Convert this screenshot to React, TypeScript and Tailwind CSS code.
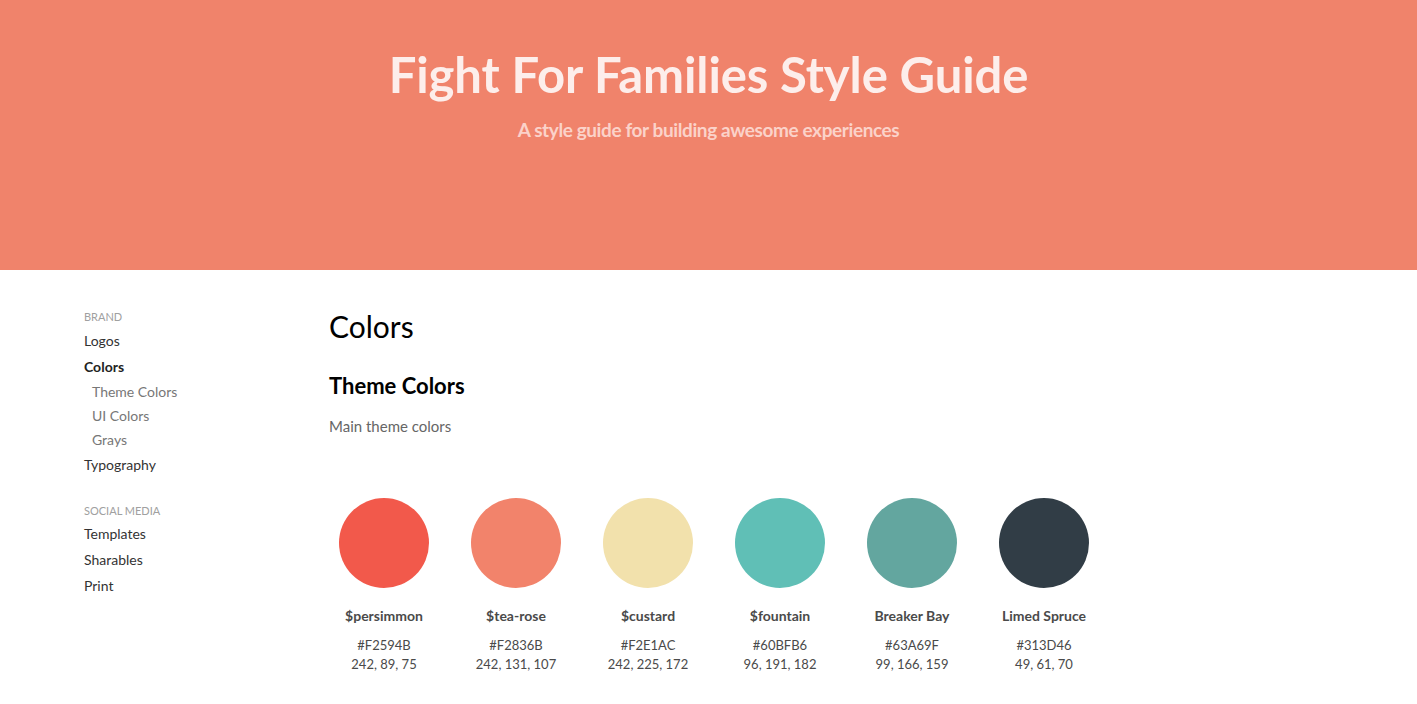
import React from "react";

const colors = [
  { name: "$persimmon", hex: "#F2594B", rgb: "242, 89, 75", bg: "bg-[#F2594B]" },
  { name: "$tea-rose", hex: "#F2836B", rgb: "242, 131, 107", bg: "bg-[#F2836B]" },
  { name: "$custard", hex: "#F2E1AC", rgb: "242, 225, 172", bg: "bg-[#F2E1AC]" },
  { name: "$fountain", hex: "#60BFB6", rgb: "96, 191, 182", bg: "bg-[#60BFB6]" },
  { name: "Breaker Bay", hex: "#63A69F", rgb: "99, 166, 159", bg: "bg-[#63A69F]" },
  { name: "Limed Spruce", hex: "#313D46", rgb: "49, 61, 70", bg: "bg-[#313D46]" },
];

export default function App() {
  return (
    <div className="min-h-[704px] bg-white font-['Lato','Liberation_Sans',sans-serif]">
      <header className="h-[270px] bg-[#F0836B] flex flex-col items-center pt-[45px]">
        <h1 className="text-[49px] leading-[58px] font-bold text-[#FDEEEB] tracking-[-0.1px]">
          Fight For Families Style Guide
        </h1>
        <p className="mt-[14px] text-[19px] leading-[26px] font-bold text-[#FBD2C9] tracking-[-0.4px]">
          A style guide for building awesome experiences
        </p>
      </header>
      <div className="flex pt-[38px]">
        <nav className="w-[329px] pl-[84px] text-[14px] shrink-0">
          <div className="text-[11px] leading-[18px] text-[#A0A0A0] uppercase">Brand</div>
          <ul className="mt-[5px]">
            <li className="leading-[20px] text-[#333]">Logos</li>
            <li className="mt-[6px] leading-[20px] text-[#222] font-bold">Colors</li>
            <li className="mt-[5px] leading-[20px] pl-[8px] text-[#777]">Theme Colors</li>
            <li className="mt-[4px] leading-[20px] pl-[8px] text-[#777]">UI Colors</li>
            <li className="mt-[4px] leading-[20px] pl-[8px] text-[#777]">Grays</li>
            <li className="mt-[5px] leading-[20px] text-[#333]">Typography</li>
          </ul>
          <div className="mt-[27px] text-[11px] leading-[18px] text-[#A0A0A0] uppercase">Social Media</div>
          <ul className="mt-[4px]">
            <li className="leading-[20px] text-[#333]">Templates</li>
            <li className="mt-[6px] leading-[20px] text-[#333]">Sharables</li>
            <li className="mt-[6px] leading-[20px] text-[#333]">Print</li>
          </ul>
        </nav>
        <main className="flex-1">
          <h2 className="text-[30px] leading-[38px] text-black -mt-[1px]">Colors</h2>
          <h3 className="mt-[26px] text-[22px] leading-[30px] font-bold text-black">Theme Colors</h3>
          <p className="mt-[14px] text-[15px] leading-[22px] text-[#666]">Main theme colors</p>
          <div className="mt-[61px] flex gap-[22px]">
            {colors.map((c) => (
              <div key={c.name} className="w-[110px] flex flex-col items-center">
                <div className={`w-[90px] h-[90px] rounded-full ${c.bg}`} />
                <div className="mt-[18px] text-[14px] leading-[20px] font-bold text-[#4A4A4A]">{c.name}</div>
                <div className="mt-[10px] text-[13px] leading-[19px] text-[#4A4A4A]">{c.hex}</div>
                <div className="text-[13px] leading-[19px] text-[#4A4A4A]">{c.rgb}</div>
              </div>
            ))}
          </div>
        </main>
      </div>
    </div>
  );
}
